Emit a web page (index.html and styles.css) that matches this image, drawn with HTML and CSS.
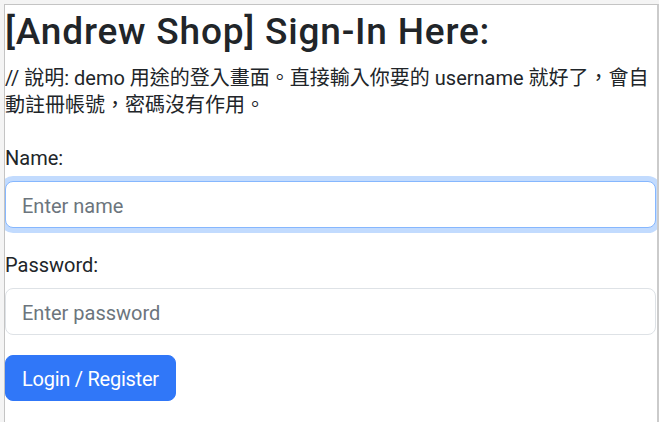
FILE: index.html
```html
<!DOCTYPE html>
<html lang="zh-Hant">
<head>
<meta charset="utf-8">
<title>Andrew Shop Sign-In</title>
<link rel="stylesheet" href="styles.css">
</head>
<body>
<div class="desk">
  <main class="frame">
    <h1 class="title">[Andrew Shop] Sign-In Here:</h1>
    <p class="note">// 說明: demo 用途的登入畫面。直接輸入你要的 username 就好了，會自動註冊帳號，密碼沒有作用。</p>
    <form class="form">
      <label class="label" for="name">Name:</label>
      <input class="field is-focused" id="name" type="text" placeholder="Enter name">
      <label class="label label-gap" for="password">Password:</label>
      <input class="field" id="password" type="password" placeholder="Enter password">
      <button class="btn" type="button">Login / Register</button>
    </form>
  </main>
</div>
</body>
</html>
```
FILE: styles.css
```css
html, body {
  margin: 0;
  padding: 0;
  background: #ffffff;
}
body {
  width: 661px;
  height: 422px;
  overflow: hidden;
  font-family: Roboto, "Noto Sans CJK TC", sans-serif;
  color: #212529;
}
.desk {
  width: 659px;
  height: 422px;
  box-sizing: border-box;
  background: #f4f4f4;
  padding: 4px 0 0 4px;
}
.frame {
  box-sizing: border-box;
  height: 418px;
  background: #ffffff;
  border-top: 1px solid #c4c4c4;
  border-left: 1px solid #c4c4c4;
  border-right: 2px solid #cbcbcb;
  overflow: hidden;
  display: flex;
  flex-direction: column;
}
.title {
  margin: 5px 0 0 0;
  font-size: 37px;
  line-height: 43px;
  font-weight: 500;
  letter-spacing: 0.8px;
  color: #212529;
}
.note {
  margin: 11px 0 0 0;
  padding-top: 1px;
  font-size: 20px;
  line-height: 27px;
}
.form {
  margin-top: 25px;
  display: flex;
  flex-direction: column;
  align-items: flex-start;
}
.label {
  font-size: 20px;
  line-height: 27px;
  padding-top: 1px;
  margin-bottom: 9px;
}
.label-gap {
  margin-top: 23px;
}
.field {
  box-sizing: border-box;
  width: 651px;
  height: 47px;
  margin: 0;
  padding: 10px 16px 8px;
  font-family: inherit;
  font-size: 20px;
  line-height: 27px;
  color: #212529;
  background: #ffffff;
  border: 1px solid #dee2e6;
  border-radius: 8px;
  outline: none;
}
.field::placeholder {
  color: #6c757d;
}
.field.is-focused {
  border-color: #86b7fe;
  box-shadow: 0 0 0 5px rgba(13, 110, 253, 0.25);
}
.btn {
  margin-top: 20px;
  box-sizing: border-box;
  height: 46px;
  padding: 10px 16px 8px;
  font-family: inherit;
  font-size: 20px;
  line-height: 27px;
  letter-spacing: -0.25px;
  color: #ffffff;
  background: #3077f8;
  border: 1px solid #3077f8;
  border-radius: 8px;
}
```
